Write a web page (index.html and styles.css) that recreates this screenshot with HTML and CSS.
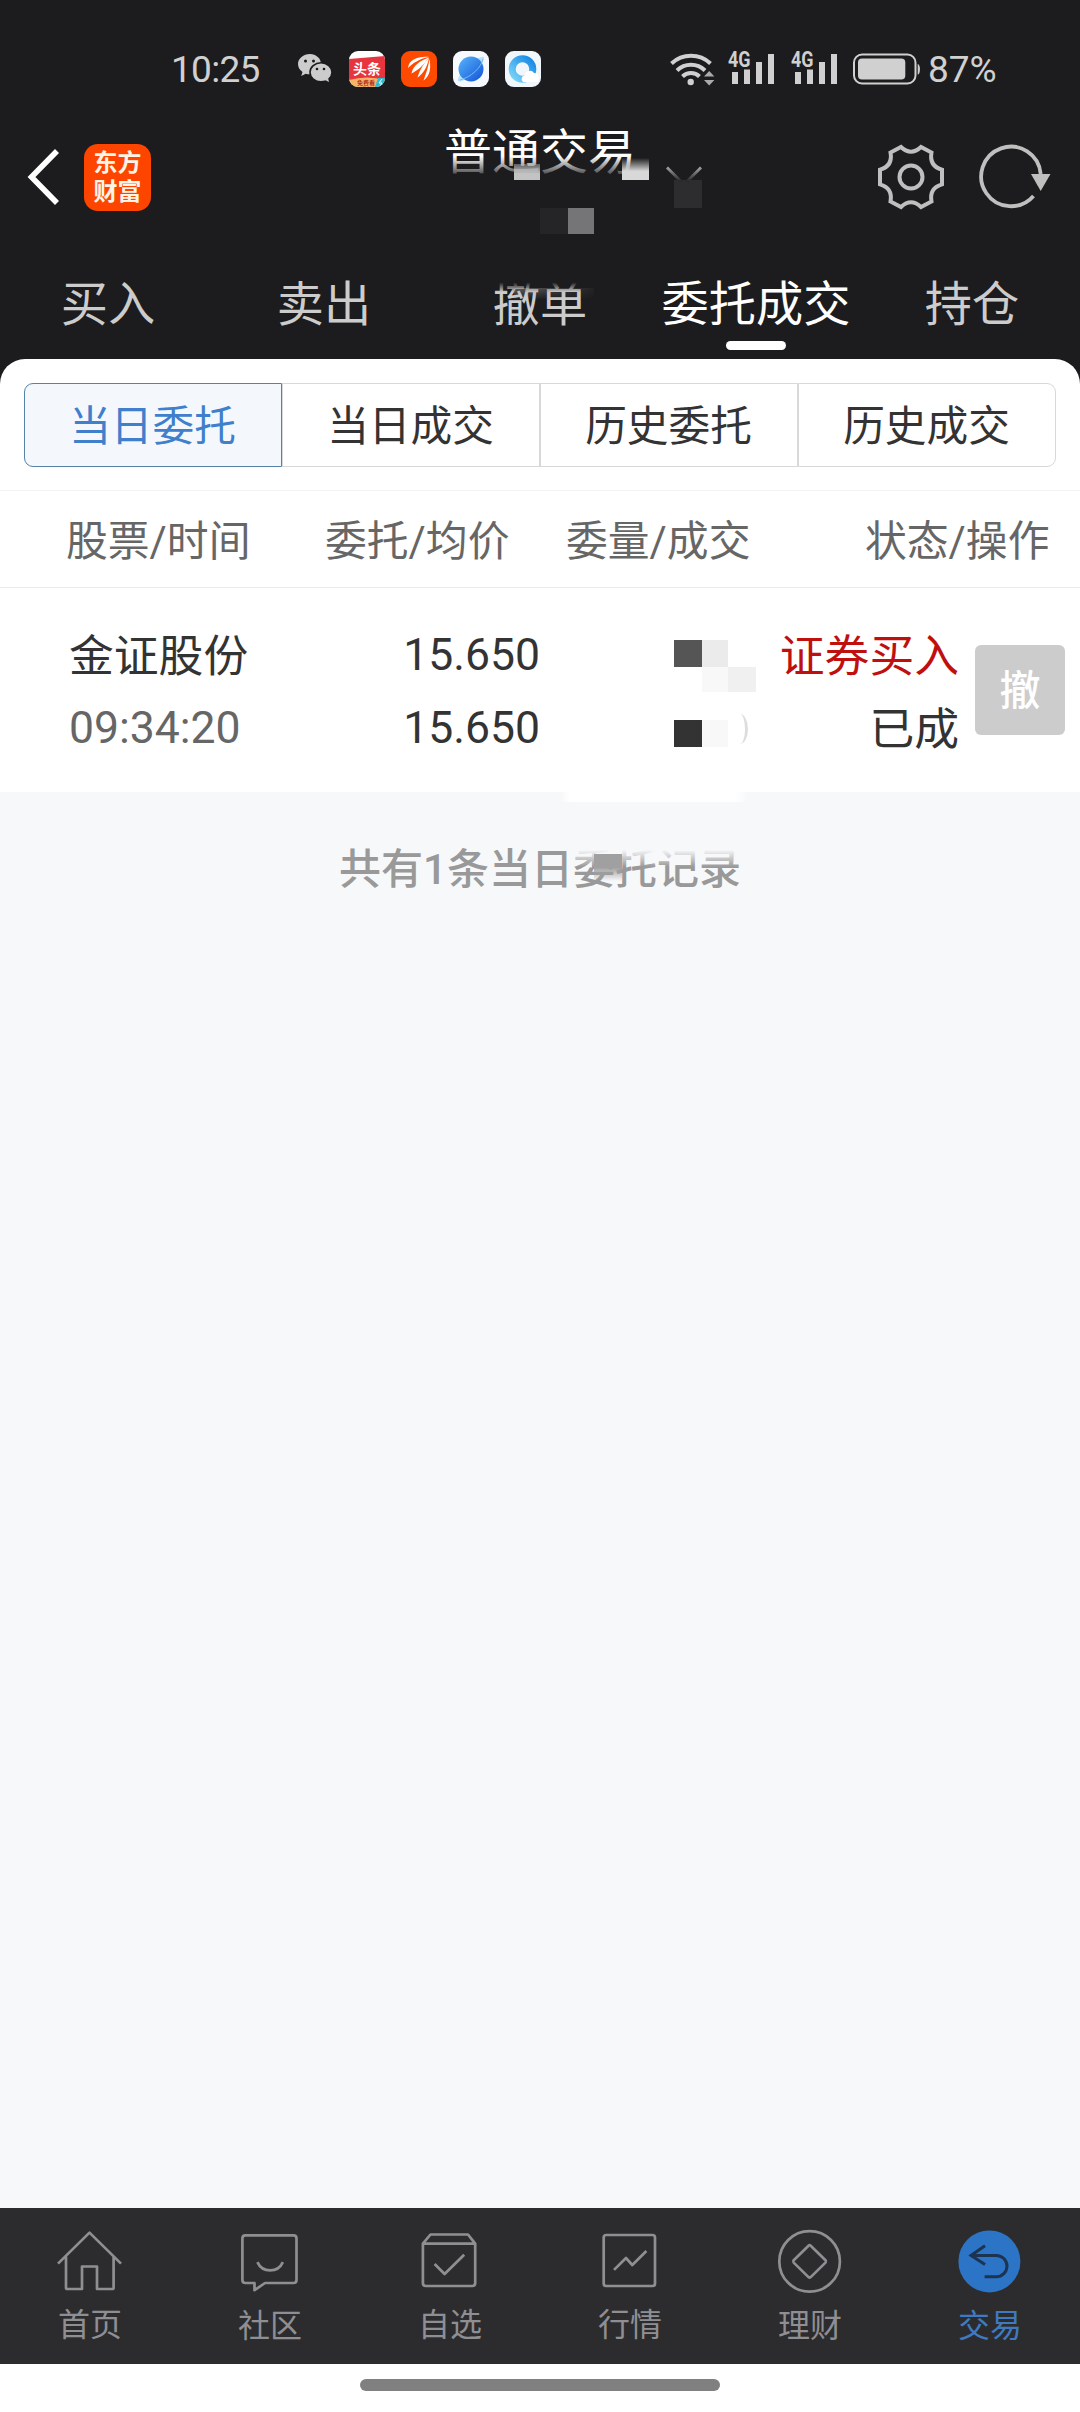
FILE: index.html
```html
<!DOCTYPE html>
<html lang="zh-CN">
<head>
<meta charset="utf-8">
<title>普通交易</title>
<link rel="stylesheet" href="styles.css">
</head>
<body>
<div class="app">
  <header class="top">
    <div class="status">
      <span class="clock">10:25</span>
      <div class="apps">
        <svg class="wechat" width="34" height="32" viewBox="0 0 34 32">
          <path d="M12 1C5.400 1 0 5.500 0 11c0 3.300 1.700 6 4.500 8L3.200 23l4.500-2.200c1.400.4 2.800.5 4.300.5C18 21 23 16.600 23 11S18 1 12 1z" fill="#ccc"/>
          <ellipse cx="23" cy="19.300" rx="11" ry="9.500" fill="#ccc" stroke="#1c1c1e" stroke-width="1.600"/>
          <path d="M27 27l4 2-1-4z" fill="#ccc"/>
          <g fill="#1c1c1e"><circle cx="7.500" cy="8" r="1.500"/><circle cx="15.500" cy="8" r="1.500"/><circle cx="19" cy="16" r="1.300"/><circle cx="26" cy="16" r="1.300"/></g>
        </svg>
        <svg width="36" height="36" viewBox="0 0 36 36">
          <clipPath id="tile"><rect width="36" height="36" rx="9"/></clipPath>
          <g clip-path="url(#tile)">
            <path d="M0 0h36v36H0z" fill="#fff"/>
            <path d="M0 8l36-3v25H0z" fill="#e8343e"/>
            <path d="M0 29q18-5 36 0v7H0z" fill="#f6b469"/>
            <path d="M29 27h7v9h-10z" fill="#2bbdd3"/>
            <path d="M33 28l-3 4h3l-2 3" fill="none" stroke="#fff"/>
            <text x="4" y="23" class="tile-main">头条</text>
            <text x="8" y="34" class="tile-sub">免费看</text>
          </g>
        </svg>
        <svg width="36" height="36" viewBox="0 0 36 36">
          <rect width="36" height="36" rx="9" fill="#fe4a00"/>
          <g fill="#fff"><path d="M28 6C18 5 8 8 7 17c5-5 11-9 21-11z"/><path d="M28 6.500C19 10 12 14 10.500 22.500c6-3 12-8 17.500-16z"/><path d="M28 7c-5 5-9 11-11.500 19.500 6-4 9.500-10 11.500-19.500z"/><path d="M28.500 8c-1 7-3 13-6 21.500 7-5 7.500-13 6-21.500z"/></g>
        </svg>
        <svg width="36" height="36" viewBox="0 0 36 36">
          <defs><linearGradient id="sphere" x2="1" y2="1"><stop stop-color="#56b6fa"/><stop offset="1" stop-color="#1451d8"/></linearGradient></defs>
          <rect width="36" height="36" rx="9" fill="#f6f9fd"/>
          <path d="M5 30C2 26 24 4 31 6c2 5-20 28-26 24z" fill="#b5e3f9"/>
          <circle cx="18" cy="18" r="12.500" fill="url(#sphere)"/>
          <path d="M7 29C18 26 28 17 30 8" fill="none" stroke="#6fbdf8" stroke-width="1"/>
        </svg>
        <svg width="36" height="36" viewBox="0 0 36 36">
          <defs><linearGradient id="ring" x1="1" x2="0" y2="1"><stop stop-color="#1586e6"/><stop offset="1" stop-color="#7ad5f7"/></linearGradient></defs>
          <rect width="36" height="36" rx="9" fill="#f1f6fb"/>
          <circle cx="17.500" cy="18" r="10.300" fill="none" stroke="url(#ring)" stroke-width="7"/>
          <path d="M18 31a4 4 0 0 1 2-7 5 5 0 0 1 9-2 5 5 0 0 1 3 9z" fill="#fff"/>
        </svg>
      </div>
      <div class="radios">
        <svg width="46" height="36" viewBox="0 0 46 36">
          <g fill="none" stroke="#d0d0d0" stroke-width="4"><path d="M1.500 12.500a28.500 28.500 0 0 1 39 0"/><path d="M7 19.500a20 20 0 0 1 28 0"/><path d="M12.500 25.500a12 12 0 0 1 17 0"/></g>
          <circle cx="20.700" cy="31" r="3.200" fill="#d0d0d0"/>
          <path d="M34 25.500l5.200-5.500 5.200 5.500zM34 29l5.200 5.500L44.400 29z" fill="#aaa"/>
        </svg>
        <svg width="48" height="36" viewBox="0 0 48 36">
          <path d="M4 21h6v12H4zM16 18.500h6V33h-6zM28 11h6v22h-6zM40 3h6v30h-6z" fill="#d0d0d0"/>
          <text x="0" y="16" class="net" textLength="22.500" lengthAdjust="spacingAndGlyphs">4G</text>
        </svg>
        <svg width="48" height="36" viewBox="0 0 48 36">
          <path d="M4 21h6v12H4zM16 18.500h6V33h-6zM28 11h6v22h-6zM40 3h6v30h-6z" fill="#d0d0d0"/>
          <text x="0" y="16" class="net" textLength="22.500" lengthAdjust="spacingAndGlyphs">4G</text>
        </svg>
        <svg width="68" height="32" viewBox="0 0 68 32">
          <rect x="1" y="1.500" width="61.500" height="29" rx="8" fill="none" stroke="#d0d0d0" stroke-width="2"/>
          <rect x="5" y="5.500" width="47.300" height="21" rx="4" fill="#d0d0d0"/>
          <path d="M64.700 11c3 0 3 10.600 0 10.600z" fill="#d0d0d0"/>
        </svg>
      </div>
      <span class="charge">87%</span>
    </div>
    <div class="titlebar">
      <svg class="back" width="36" height="60" viewBox="0 0 36 60"><path d="M32 4L6.500 30 32 56" fill="none" stroke="#fff" stroke-width="5.600"/></svg>
      <div class="logo"><span>东方</span><span>财富</span></div>
      <h1 class="title">普通交易</h1>
      <svg class="gear" width="72" height="68" viewBox="-36 -34 72 68" fill="none" stroke="#bfbfbf" stroke-width="4">
        <path d="M-10-30Q0-20.500 10-30L20.500-24.500Q18-11 31-7.300V7.300Q18 11 20.500 24.500L10 30Q0 20.500-10 30L-20.500 24.500Q-18 11-31 7.300V-7.300Q-18-11-20.500-24.500Z"/>
        <circle r="11.500"/>
      </svg>
      <svg class="refresh" width="72" height="68" viewBox="-33 -34 72 68">
        <path d="M29.700-3A29.800 29.800 0 1 0 22.500 19" fill="none" stroke="#bfbfbf" stroke-width="3.800"/>
        <path d="M20-3h19.500L29.700 14z" fill="#bfbfbf"/>
      </svg>
      <div class="veil"></div>
      <i class="px p1"></i><i class="px p2"></i><i class="px p3"></i><i class="px p4"></i><i class="px p5"></i>
      <svg class="caret" width="40" height="16" viewBox="0 0 40 16">
        <defs><linearGradient id="fade" x2="0" y2="1"><stop stop-color="#aaa"/><stop offset="1" stop-color="#242426"/></linearGradient></defs>
        <path d="M2 1.500l13 13h4l-15-15zM38 1.500l-13 13h-4l15-15z" fill="url(#fade)"/>
      </svg>
    </div>
    <nav class="tabs">
      <a>买入</a><a>卖出</a><a class="smudged">撤单</a><a class="on">委托成交</a><a>持仓</a>
    </nav>
  </header>

  <main class="sheet">
    <div class="filter">
      <div class="segments">
        <button class="seg on">当日委托</button><button class="seg">当日成交</button><button class="seg">历史委托</button><button class="seg">历史成交</button>
      </div>
    </div>
    <div class="head">
      <span>股票/时间</span><span>委托/均价</span><span>委量/成交</span><span>状态/操作</span>
    </div>
    <div class="order">
      <div class="cell name"><span>金证股份</span><span class="num time">09:34:20</span></div>
      <div class="cell price"><span class="num">15.650</span><span class="num">15.650</span></div>
      <div class="cell qty">
        <i class="px q1"></i><i class="px q2"></i><i class="px q3"></i><i class="px q4"></i><i class="px q5"></i><i class="px q6"></i><i class="arc"></i>
      </div>
      <div class="cell state"><span class="buy">证券买入</span><span>已成</span></div>
      <button class="cancel">撤</button>
      <i class="patch"></i>
    </div>
  </main>
  <p class="summary">共有1条当日委托记录<i class="mist"></i><i class="blot"></i></p>

  <footer class="nav">
    <a><svg viewBox="0 0 72 72"><path d="M4 35.600L35.500 4.600 67 35.600M12 28.800V59.700q0 1.300 1.300 1.300H28V38.500H43V61H58.300q1.300 0 1.300-1.300V28.800"/></svg><span>首页</span></a>
    <a class="low"><svg viewBox="0 0 72 72"><path d="M11.400 7.300H59.500q3 0 3 3V52q0 3-3 3H31L20.500 62.200V55H11.400q-3 0-3-3V10.300q0-3 3-3z"/><path d="M23.400 34.100c5 11 20.500 11 25.500 0"/></svg><span>社区</span></a>
    <a><svg viewBox="0 0 72 72"><path d="M8.900 15.600L16.500 6.500H54l7.200 9.100V55q0 3-3 3H11.900q-3 0-3-3zH61.200M20.600 36L30.600 46 50.200 26.700"/></svg><span>自选</span></a>
    <a><svg viewBox="0 0 72 72"><rect x="9.700" y="7" width="51.300" height="51" rx="2.500"/><path d="M20 41.900L32 30 38.300 37 52.400 23"/></svg><span>行情</span></a>
    <a class="low"><svg viewBox="0 0 72 72"><circle cx="35.600" cy="33.400" r="30.300"/><path d="M34.500 17.700q1.100-1 2.200 0L51.500 32.200q1 1.200 0 2.400L36.700 49.100q-1.100 1-2.200 0L19.700 34.600q-1-1.200 0-2.400z"/></svg><span>理财</span></a>
    <a class="on low"><svg viewBox="0 0 72 72"><circle class="disc" cx="35.400" cy="33.400" r="31"/><path d="M31 17.700L17 27.400 31 36.600M17 27.400H42.300a10.700 10.700 0 0 1 0 21.400H30.600"/></svg><span>交易</span></a>
  </footer>
  <div class="gesture"><i></i></div>
</div>
</body>
</html>
```
FILE: styles.css
```css
* { box-sizing: border-box; }
body { margin: 0; background: #fff; font-family: Roboto, "Noto Sans CJK SC", sans-serif; }
svg { display: block; flex: none; overflow: visible; }
.app { width: 1080px; height: 2412px; display: flex; flex-direction: column; background: #f7f8fa; overflow: hidden; }
.px { position: absolute; display: block; }

.top { height: 384px; flex: none; background: #1c1c1e; }
.status { height: 110px; padding: 28px 0 0 171px; display: flex; align-items: center; color: #d0d0d0; font-size: 37px; line-height: 82px; }
.clock { width: 127px; letter-spacing: -0.7px; }
.apps { display: flex; gap: 16px; align-items: center; }
.wechat { margin-right: 1px; }
.radios { display: flex; align-items: center; margin-left: 129px; }
.radios svg:nth-child(1) { margin-right: 12px; }
.radios svg:nth-child(2) { margin-right: 15px; }
.radios svg:nth-child(3) { margin-right: 14px; }
.charge { margin-left: 7px; }
.status .charge, .status .clock { position: relative; top: 1px; }
.tile-main { font: 700 14px "Noto Sans CJK SC", sans-serif; fill: #fff; }
.tile-sub { font: 700 6px "Noto Sans CJK SC", sans-serif; fill: #b4331c; }
.net { font: 700 22px Roboto, sans-serif; fill: #d0d0d0; stroke: #1c1c1e; stroke-width: 1px; paint-order: stroke; }

.titlebar { position: relative; height: 150px; padding: 0 30px 16px 25px; display: flex; align-items: center; }
.logo { width: 67px; height: 67px; margin-left: 23px; padding-top: 5px; border-radius: 14px; background: #fe4500; color: #fff3e6; display: flex; flex-direction: column; align-items: center; font: 700 24px/29px Roboto, "Noto Sans CJK SC", sans-serif; }
.title { flex: 1; margin: 0 0 48px; padding-left: 293px; color: #fff; font-size: 48px; font-weight: 400; line-height: 60px; white-space: nowrap; }
.refresh { margin-left: 31px; }
.veil { position: absolute; left: 440px; top: 46px; width: 215px; height: 36px; background: linear-gradient(rgba(28,28,30,0), #1c1c1e 65%); }
.p1 { left: 514px; top: 54px; width: 26px; height: 16px; background: linear-gradient(rgba(195,195,195,.4), #c3c3c3 60%); }
.p2 { left: 622px; top: 48px; width: 27px; height: 22px; background: linear-gradient(rgba(216,216,216,0), #d8d8d8 60%); }
.p3 { left: 540px; top: 98px; width: 28px; height: 26px; background: #252527; }
.p4 { left: 568px; top: 98px; width: 26px; height: 26px; background: #757577; }
.p5 { left: 674px; top: 70px; width: 28px; height: 28px; background: #2d2d2f; }
.caret { position: absolute; left: 664px; top: 57px; }

.tabs { display: grid; grid-template-columns: repeat(5, 1fr); height: 99px; }
.tabs a { position: relative; text-align: center; color: #ccc; font-size: 47.200px; line-height: 90px; white-space: nowrap; }
.tabs .on { color: #fff; }
.tabs .on::after { content: ""; position: absolute; left: 78px; bottom: 9px; width: 60px; height: 9px; border-radius: 5px; background: #fff; }
.tabs .smudged::before { content: ""; position: absolute; left: 44px; top: 16px; width: 120px; height: 16px; background: linear-gradient(#1c1c1e 40%, rgba(28,28,30,0)); }
.tabs .smudged::after { content: ""; position: absolute; left: 82px; top: 28px; width: 80px; height: 12px; background: linear-gradient(90deg, rgba(180,180,180,.45), rgba(120,120,120,.08)); mask: linear-gradient(#000, transparent); }

.sheet { flex: none; height: 433px; margin-top: -25px; border-radius: 25px 25px 0 0; background: #fff; }
.filter { height: 132px; padding: 24px 24px 0; border-bottom: 1px solid #f3f3f3; }
.segments { display: grid; grid-template-columns: repeat(4, 1fr); height: 84px; }
.seg { margin: 0; padding: 4px 1px 0 0; border: 1px solid #d6d8d9; background: #fff; color: #333; font: 400 41.700px/78px Roboto, "Noto Sans CJK SC", sans-serif; }
.seg:first-child { border-radius: 9px 0 0 9px; }
.seg:last-child { border-radius: 0 9px 9px 0; }
.seg.on { border-color: #5682a5; background: #f4f8fd; color: #3f7fcb; }

.head { height: 97px; display: grid; grid-template-columns: 259px 240px 299px 182px; padding: 3px 0 0 66px; border-bottom: 1px solid #ebebeb; color: #666; font-size: 41.800px; line-height: 96px; white-space: nowrap; }
.head span:nth-child(3), .head span:nth-child(4) { padding-left: 1px; }

.order { position: relative; height: 204px; display: flex; padding: 32px 15px 0 69px; color: #333; font-size: 44.800px; line-height: 73px; }
.cell { display: flex; flex-direction: column; white-space: nowrap; }
.name { width: 250px; }
.time { color: #666; }
.num { position: relative; top: -1px; font-size: 44.500px; }
.price { width: 221px; align-items: flex-end; }
.qty { position: relative; width: 240px; }
.state { width: 179px; align-items: flex-end; }
.buy { color: #c00f0f; }
.cancel { width: 90px; height: 90px; margin: 25px 0 0 auto; padding: 2px 0 0; border: 0; border-radius: 6px; background: #ccc; color: #fff; font: 500 41px/88px Roboto, "Noto Sans CJK SC", sans-serif; }
.q1 { left: 134px; top: 20px; width: 28px; height: 27px; background: #555; }
.q2 { left: 162px; top: 20px; width: 26px; height: 27px; background: #ebebeb; }
.q3 { left: 162px; top: 47px; width: 26px; height: 25px; background: #f8f8f8; }
.q4 { left: 188px; top: 47px; width: 28px; height: 25px; background: #f0f0f0; }
.q5 { left: 134px; top: 100px; width: 28px; height: 27px; background: #333; }
.q6 { left: 162px; top: 100px; width: 26px; height: 27px; background: #f8f8f8; }
.arc { position: absolute; left: 192px; top: 94px; width: 16px; height: 30px; border-right: 3px solid #ddd; border-radius: 50%; }
.patch { position: absolute; left: 560px; top: 204px; width: 188px; height: 10px; background: linear-gradient(90deg, transparent, #fff 10px, #fff 176px, transparent); }

.summary { position: relative; flex: none; margin: 38px 0 0; height: 80px; text-align: center; color: #999; font-size: 42px; font-weight: 500; line-height: 80px; }
.mist { position: absolute; left: 570px; top: 14px; width: 175px; height: 23px; background: linear-gradient(#f7f8fa 25%, rgba(247,248,250,0)); }
.blot { position: absolute; left: 594px; top: 24px; width: 28px; height: 27px; background: linear-gradient(#a0a0a0 50%, rgba(160,160,160,0)); }

.nav { flex: none; height: 156px; margin-top: auto; display: grid; grid-template-columns: repeat(6, 1fr); background: #2c2c2e; color: #8f8f93; font-size: 32px; }
.nav a { display: flex; flex-direction: column; align-items: center; padding-top: 20px; }
.nav span { line-height: 40px; margin-top: 5px; }
.nav .low span { margin-top: 6px; }
.nav svg { width: 72px; height: 72px; fill: none; stroke: #8f8f93; stroke-width: 2.700px; stroke-linejoin: round; }
.nav .on { color: #3f7ac0; }
.nav .on svg { stroke: #1d3352; stroke-width: 3px; stroke-linejoin: miter; }
.nav .disc { fill: #2b74c6; stroke: none; }
.gesture { flex: none; height: 48px; padding-top: 15px; background: #fff; }
.gesture i { display: block; width: 360px; height: 12px; margin: 0 auto; border-radius: 6px; background: #808080; }
```
